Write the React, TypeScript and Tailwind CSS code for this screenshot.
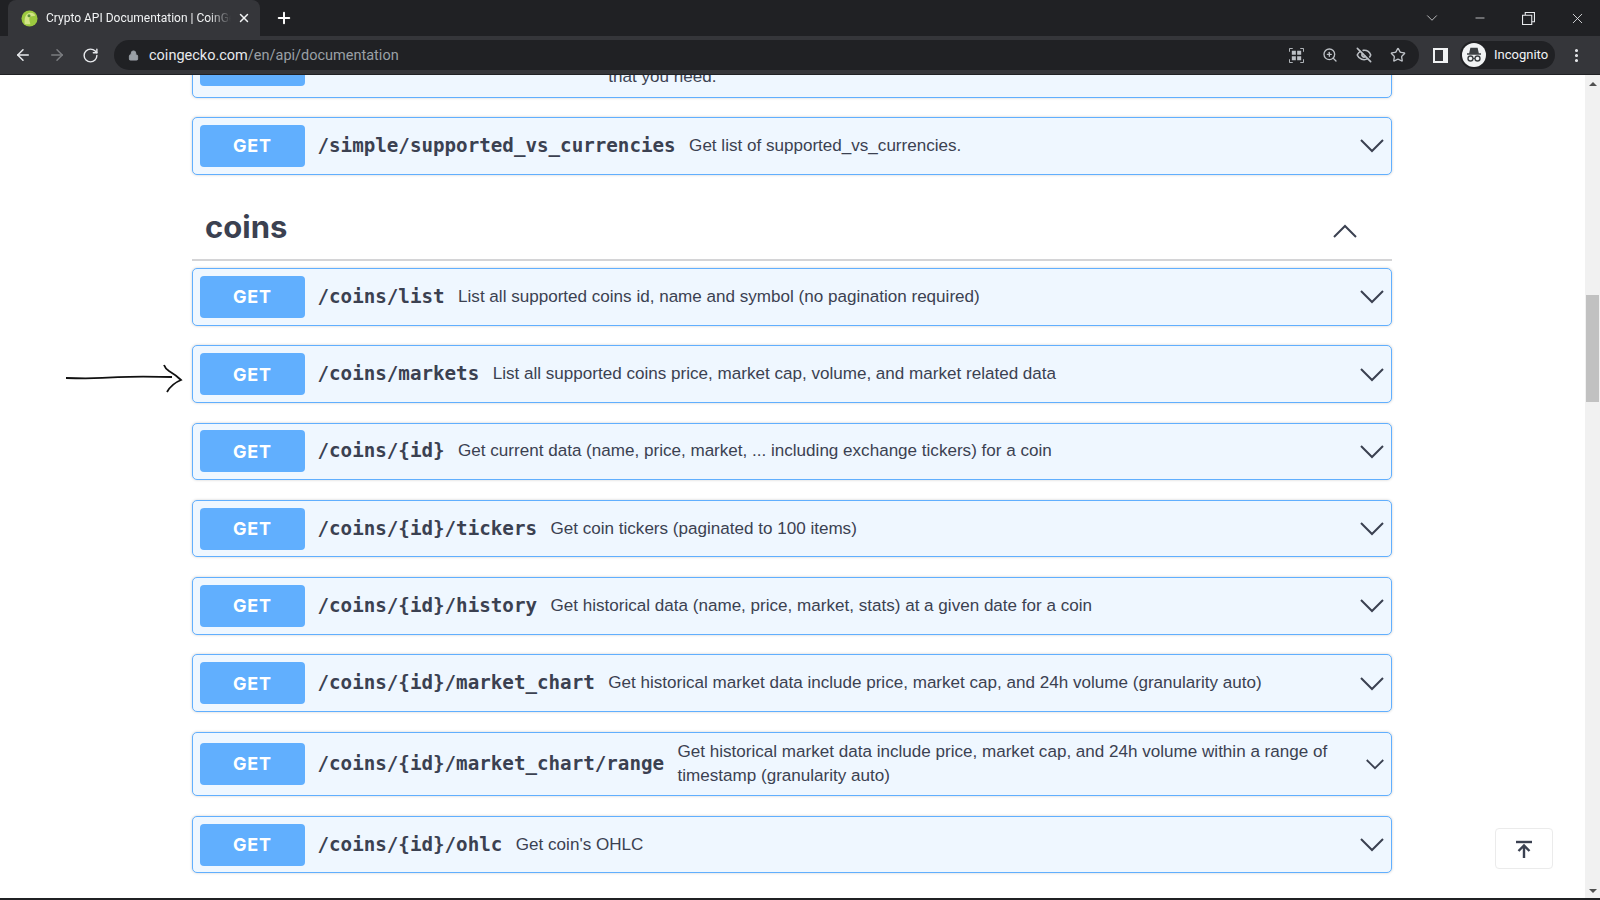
import React from "react";
import { ArrowLeft, ArrowRight, RotateCw, Lock, ZoomIn, EyeOff, Star, X, Plus, ChevronDown, Minus, MoreVertical } from "lucide-react";

const mono = { fontFamily: '"DejaVu Sans Mono", monospace' };

function Chev({ small = false, up = false }: { small?: boolean; up?: boolean }) {
  return (
    <svg viewBox="0 0 24 14" className={small ? "mt-[1px] h-[11px] w-[18px] shrink-0" : "mt-[1px] h-[14px] w-[24px] shrink-0"} fill="none" stroke="#3b4151" strokeWidth={small ? 2.4 : 2}>
      <path d={up ? "M1 13L12 2l11 11" : "M1 1l11 11L23 1"} />
    </svg>
  );
}

function Row({ path, desc, tall = false, height = "h-[57.5px] pr-[7px]", pathClass = "pt-[1px]" }: { path: string; desc: React.ReactNode; tall?: boolean; height?: string; pathClass?: string }) {
  return (
    <div className={`mb-[19.75px] flex items-center rounded-[5px] border border-[#61affe] bg-[#eff7ff] pl-[7px] shadow-[0_0_3px_rgba(0,0,0,0.19)] ${tall ? "h-[64.5px] pr-[7.5px]" : height}`}>
      <div className="flex h-[42px] w-[105px] shrink-0 items-center justify-center rounded-[4px] bg-[#61affe] text-[18px] font-bold tracking-[0.8px] text-white" style={{ fontFamily: "Inter, sans-serif" }}>GET</div>
      <div className={`ml-[12.5px] shrink-0 whitespace-nowrap text-[19.2px] font-bold text-[#3b4151] ${pathClass}`} style={mono}>{path}</div>
      <div className="ml-[13.5px] flex-1 text-[17.07px] leading-[24px] text-[#3b4151]" style={{ fontFamily: '"Liberation Sans", sans-serif' }}>{desc}</div>
      <Chev small={tall} />
    </div>
  );
}

function Gecko() {
  return (
    <svg viewBox="0 0 18 18" className="h-[17px] w-[17px]">
      <circle cx="9" cy="9" r="8.5" fill="#9cc93f" />
      <path d="M4 15C3 9 5 3 10 3c3 0 5 2 5 3l-5 1c-2 1-1 5 0 8z" fill="#d9e88f" opacity="0.9" />
      <circle cx="8.500" cy="6" r="1.6" fill="#5a8f3a" />
    </svg>
  );
}

function Incog() {
  return (
    <div className="flex h-[24px] w-[24px] items-center justify-center rounded-full bg-[#f1f3f4]">
      <svg viewBox="0 0 20 20" className="h-[20px] w-[20px]" fill="none">
        <path d="M3 9h14M6 8l1-4.500h6L14 8z" stroke="#3c4043" strokeWidth="1.5" fill="#3c4043" />
        <circle cx="6.500" cy="13.500" r="2.500" stroke="#3c4043" strokeWidth="1.4" />
        <circle cx="13.500" cy="13.500" r="2.500" stroke="#3c4043" strokeWidth="1.4" />
        <path d="M9 13.500h2" stroke="#3c4043" strokeWidth="1.2" />
      </svg>
    </div>
  );
}

export default function App() {
  return (
    <div className="relative flex h-[900px] w-[1600px] flex-col overflow-hidden bg-white" style={{ fontFamily: '"Liberation Sans", sans-serif' }}>
      {/* tab strip */}
      <div className="flex h-[36px] shrink-0 items-center bg-[#202124] pl-[8px]">
        <div className="flex h-[36px] w-[252px] items-center rounded-t-[8px] bg-[#35363a] pl-[13px] pr-[7px] text-[12px] text-[#f1f3f4]" style={{ fontFamily: 'Roboto, sans-serif' }}>
          <Gecko />
          <span className="ml-[8px] w-[185px] overflow-hidden whitespace-nowrap" style={{ maskImage: "linear-gradient(to right, black 88%, transparent)" }}>Crypto API Documentation | CoinGecko</span>
          <X size={14} color="#f1f3f4" strokeWidth={2.5} className="ml-[6px]" />
        </div>
        <Plus size={18} color="#ffffff" strokeWidth={2.6} className="ml-[15px]" />
        <div className="flex-1" />
        <ChevronDown size={18} color="#c8cacc" strokeWidth={1.2} className="mr-[32px]" />
        <Minus size={14} color="#e8eaed" strokeWidth={1.3} className="mr-[35px]" />
        <svg viewBox="0 0 12 12" className="mr-[34px] h-[13px] w-[13px]" fill="none" stroke="#e8eaed" strokeWidth="1">
          <path d="M.5 3h8.500v8.500H.5zM3 3V.5h8.500V9H9" />
        </svg>
        <X size={17} color="#e8eaed" strokeWidth={1.2} className="mr-[14px]" />
      </div>
      {/* toolbar */}
      <div className="flex h-[39px] shrink-0 items-center border-b border-[#202124] bg-[#35363a] pl-[14px]">
        <ArrowLeft size={18} color="#e8eaed" strokeWidth={2} />
        <ArrowRight size={18} color="#7b7d80" strokeWidth={2} className="ml-[16px]" />
        <RotateCw size={17} color="#e8eaed" strokeWidth={2} className="ml-[16px]" />
        <div className="ml-[15px] flex h-[30px] w-[1305px] items-center rounded-full bg-[#202124] pl-[14px] text-[14.500px]" style={{ fontFamily: 'Roboto, sans-serif' }}>
          <Lock size={11} color="#9aa0a6" fill="#9aa0a6" />
          <span className="ml-[10px] pt-[1px] text-[#e8eaed]">coingecko.com</span>
          <span className="pt-[1px] text-[#9aa0a6]">/en/api/documentation</span>
          <div className="flex-1" />
          <svg viewBox="0 0 16 16" className="h-[15px] w-[15px]" fill="none" stroke="#bdc1c6" strokeWidth="1">
            <path d="M.5 4V.5H4M12 .5h3.500V4M15.500 12v3.500H12M4 15.500H.5V12" />
            <path d="M3 3h4.300v4.300H3zM8.700 3H13v4.300H8.700zM3 8.700h4.300V13H3zM8.700 8.700H13V13H8.700z" fill="#bdc1c6" stroke="none" />
          </svg>
          <ZoomIn size={16} color="#bdc1c6" strokeWidth={2} className="ml-[18px]" />
          <EyeOff size={16} color="#bdc1c6" strokeWidth={2.400} className="ml-[18px]" />
          <Star size={16} color="#bdc1c6" strokeWidth={2} className="ml-[18px] mr-[13px]" />
        </div>
        <svg viewBox="0 0 15 15" className="ml-[14px] h-[15px] w-[15px]">
          <path d="M0 0h15v15H0z" fill="#f1f3f4" />
          <path d="M2 2h8v11H2z" fill="#35363a" />
        </svg>
        <div className="ml-[12px] flex h-[28px] w-[95px] items-center rounded-full bg-[#202124] pl-[2px] text-[13px] text-[#f1f3f4]" style={{ fontFamily: 'Roboto, sans-serif' }}>
          <Incog />
          <span className="ml-[8px]">Incognito</span>
        </div>
        <MoreVertical size={17} color="#e8eaed" strokeWidth={2.400} className="ml-[13px]" />
      </div>

      {/* page */}
      <div className="flex min-h-0 flex-1">
        <div className="relative min-w-0 flex-1 overflow-hidden pl-[192px] pr-[193px]">
          <div className="-mb-[0.75px] -mt-[43px]">
            <Row height="h-[66px] pr-[7px]" pathClass="mb-[12px]" path="/simple/token_price/{id}" desc={<>Get current price of tokens (using contract addresses) for a given platform in any other<br />that you need.</>} />
          </div>
          <Row path="/simple/supported_vs_currencies" desc="Get list of supported_vs_currencies." />
          <div className="-mt-[19.75px] flex h-[86.5px] items-center justify-between border-b-2 border-[#d4d4d6] pl-[13px] pr-[35px] pt-[21px]">
            <h2 className="text-[31px] font-bold text-[#3b4151]" style={{ fontFamily: 'Inter, sans-serif' }}>coins</h2>
            <div className="mt-[6px]"><Chev up /></div>
          </div>
          <div className="h-[7px]" />
          <Row path="/coins/list" desc="List all supported coins id, name and symbol (no pagination required)" />
          <Row path="/coins/markets" desc="List all supported coins price, market cap, volume, and market related data" />
          <Row path="/coins/{id}" desc="Get current data (name, price, market, ... including exchange tickers) for a coin" />
          <Row path="/coins/{id}/tickers" desc="Get coin tickers (paginated to 100 items)" />
          <Row path="/coins/{id}/history" desc="Get historical data (name, price, market, stats) at a given date for a coin" />
          <Row path="/coins/{id}/market_chart" desc="Get historical market data include price, market cap, and 24h volume (granularity auto)" />
          <Row tall path="/coins/{id}/market_chart/range" desc="Get historical market data include price, market cap, and 24h volume within a range of timestamp (granularity auto)" />
          <Row path="/coins/{id}/ohlc" desc="Get coin's OHLC" />

          {/* hand-drawn arrow */}
          <svg viewBox="0 0 125 30" className="absolute left-[62px] top-[289px] h-[30px] w-[125px]" fill="none" stroke="#111" strokeWidth="1.800">
            <path d="M4 14c18 .6 36 .4 52-.8 20-1 35-.4 54-.2" />
            <path d="M102 1c1 3 2 4 5 6 5 3 9 6 12 9-5 2-10 5-14 12" />
          </svg>

          {/* back to top */}
          <div className="absolute bottom-[29px] right-[32px] flex h-[41px] w-[58px] items-center justify-center rounded-[4px] border border-[#ebebeb] bg-white">
            <svg viewBox="0 0 18 18" className="h-[20px] w-[18px]" fill="none" stroke="#3b4151" strokeWidth="2.400">
              <path d="M1 2h16" />
              <path d="M9 18V6M3.500 11L9 5.500 14.500 11" />
            </svg>
          </div>
        </div>
        {/* scrollbar */}
        <div className="flex w-[15px] shrink-0 flex-col items-center bg-[#f1f1f1]">
          <div className="mt-[7px] h-0 w-0 border-x-[4px] border-b-[4px] border-x-transparent border-b-[#505050]" />
          <div className="mt-[209px] h-[107px] w-[13px] bg-[#c1c1c1]" />
          <div className="flex-1" />
          <div className="mb-[5px] h-0 w-0 border-x-[4px] border-t-[4px] border-x-transparent border-t-[#505050]" />
        </div>
      </div>
      <div className="h-[2px] shrink-0 bg-[#202124]" />
    </div>
  );
}
